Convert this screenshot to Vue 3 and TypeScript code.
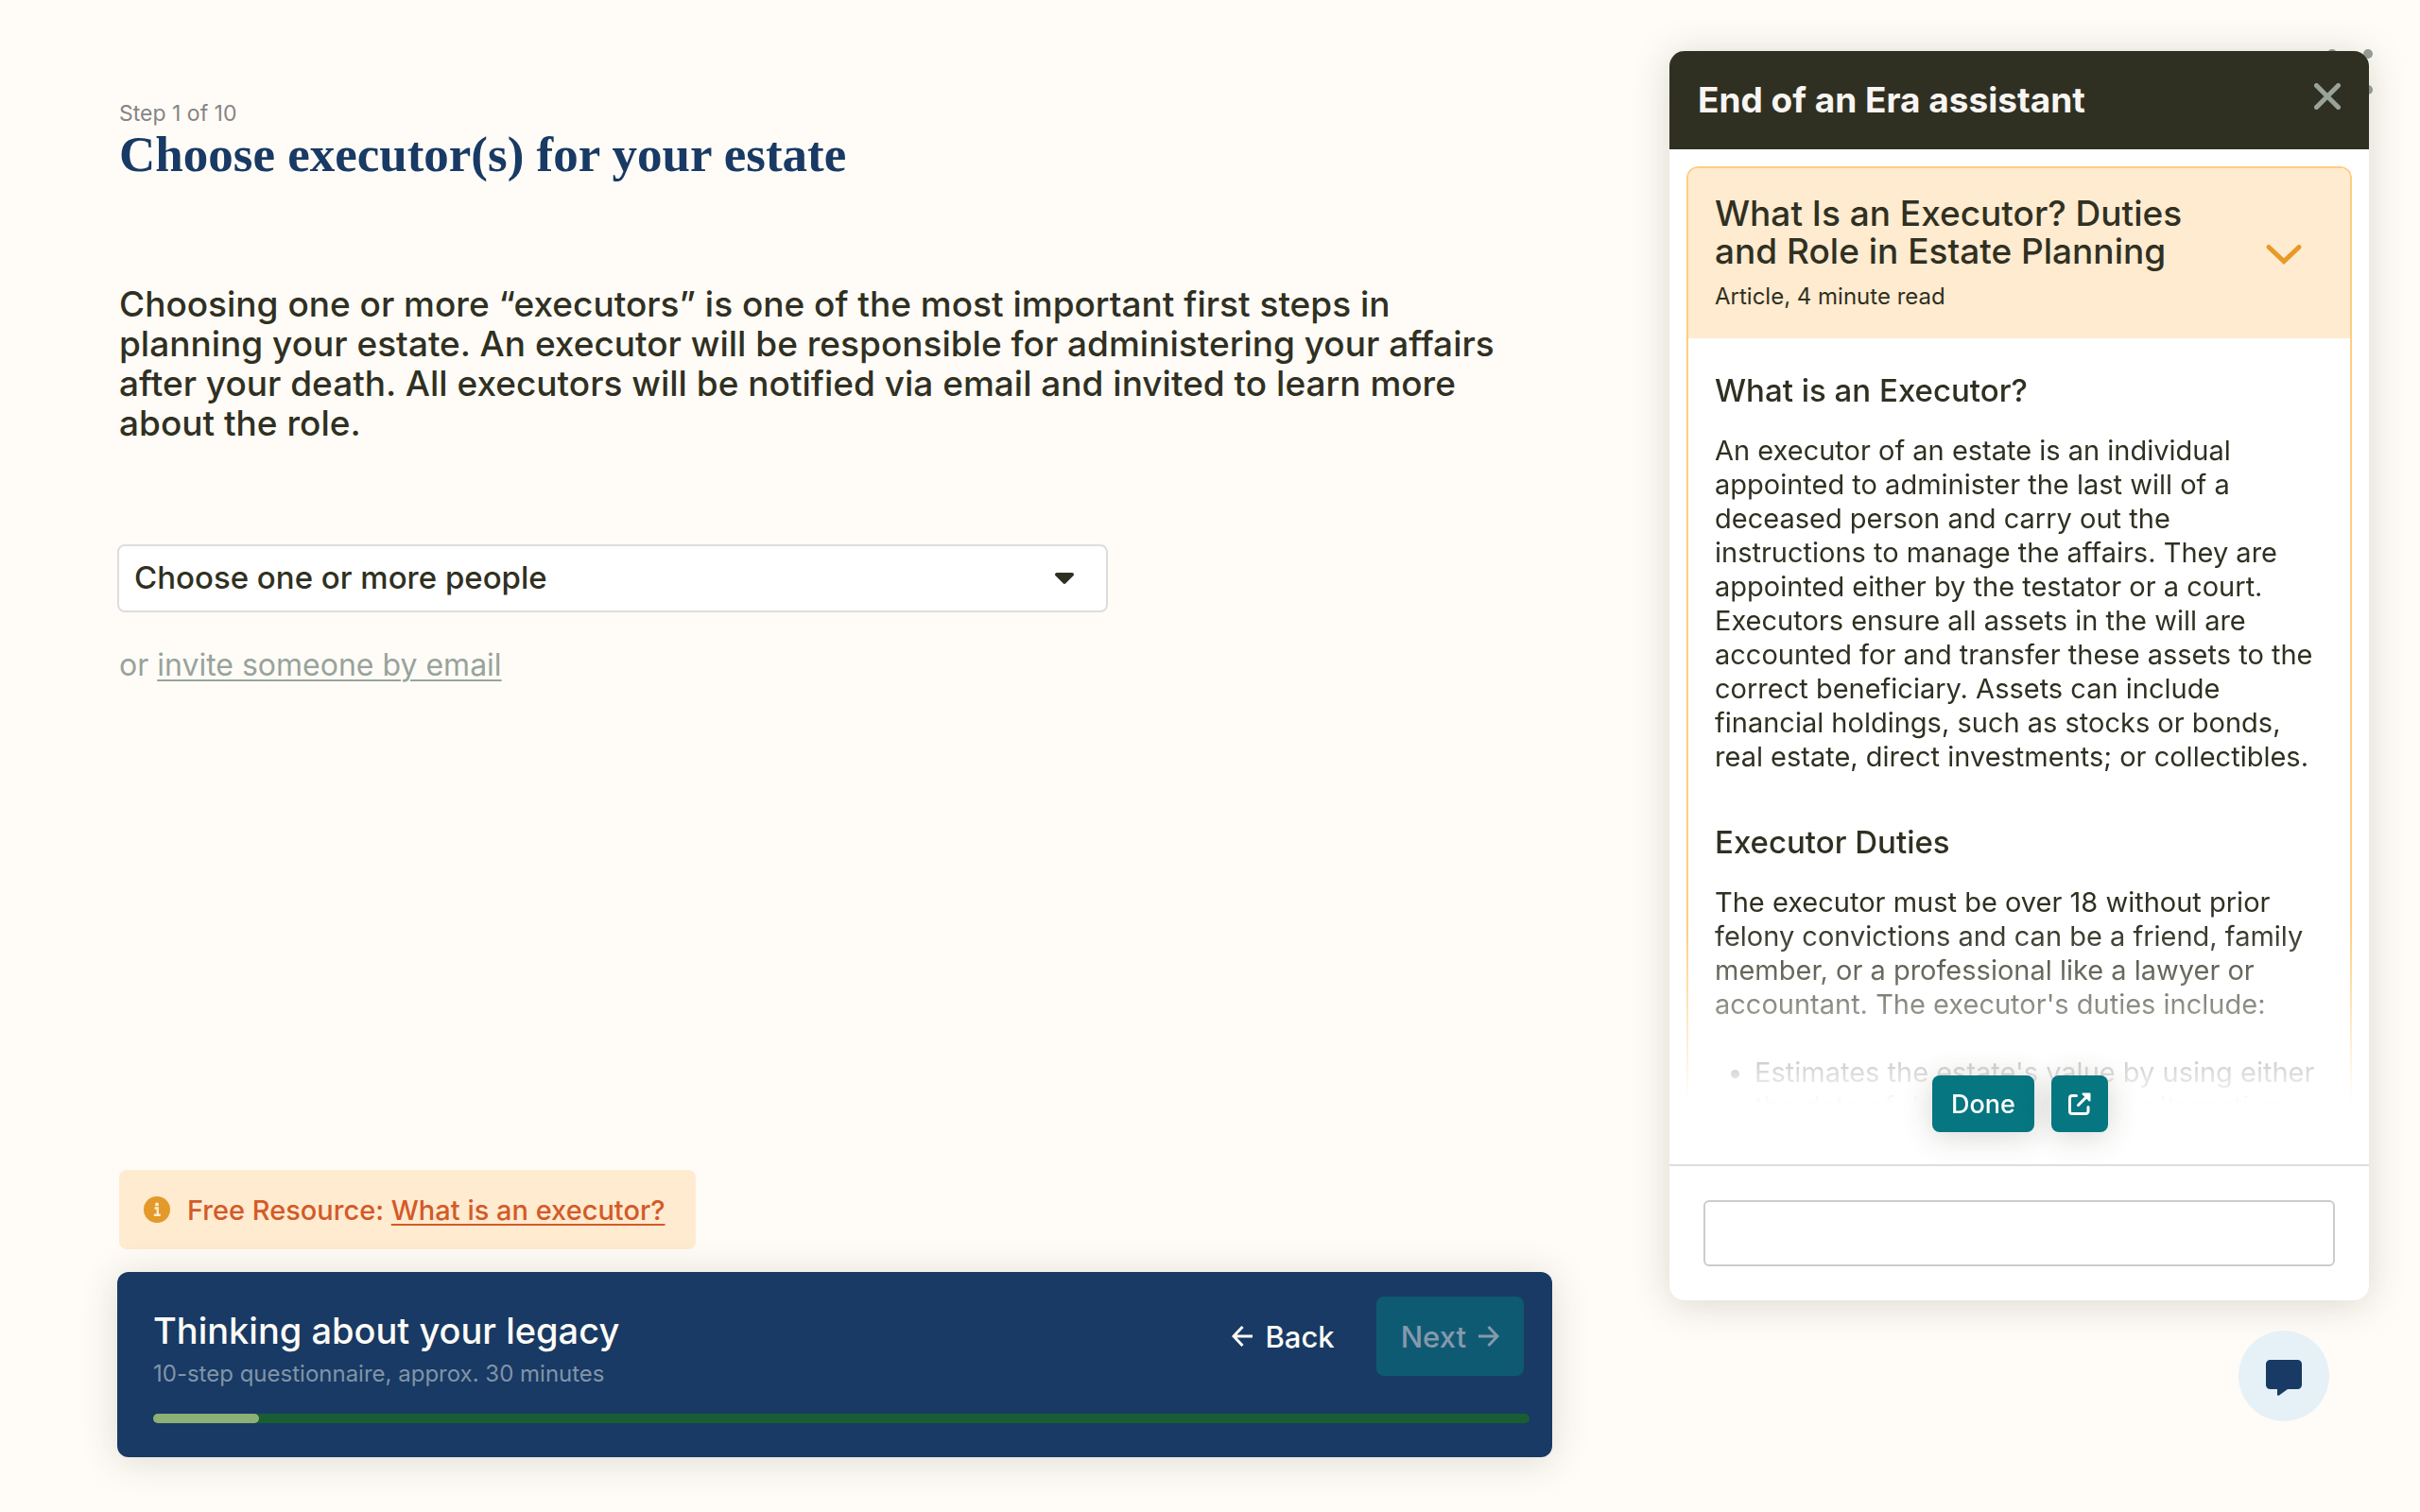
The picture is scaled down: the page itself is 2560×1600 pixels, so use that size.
<script setup lang="ts">
import { ref } from 'vue'

const person = ref('')
const message = ref('')
const step = 1
const totalSteps = 13

const intro: string[] = [
  'Choosing one or more “executors” is one of the most important first steps in',
  'planning your estate. An executor will be responsible for administering your affairs',
  'after your death. All executors will be notified via email and invited to learn more',
  'about the role.',
]

const definition: string[] = [
  'An executor of an estate is an individual',
  'appointed to administer the last will of a',
  'deceased person and carry out the',
  'instructions to manage the affairs. They are',
  'appointed either by the testator or a court.',
  'Executors ensure all assets in the will are',
  'accounted for and transfer these assets to the',
  'correct beneficiary. Assets can include',
  'financial holdings, such as stocks or bonds,',
  'real estate, direct investments; or collectibles.',
]

const duties: string[] = [
  'The executor must be over 18 without prior',
  'felony convictions and can be a friend, family',
  'member, or a professional like a lawyer or',
  "accountant. The executor's duties include:",
]

const dutyItems: string[][] = [
  ["Estimates the estate's value by using either", 'the date of death value or the alternative'],
]
</script>

<template>
  <div class="page">
    <button class="menu" type="button" aria-label="Menu">
      <svg width="48" height="48" viewBox="0 0 48 48" fill="currentColor" aria-hidden="true">
        <circle cx="5" cy="5" r="5" /><circle cx="43" cy="5" r="5" />
        <circle cx="5" cy="43" r="5" /><circle cx="43" cy="43" r="5" />
      </svg>
    </button>

    <main class="main">
      <header class="intro">
        <p class="step">Step 1 of 10</p>
        <h1>Choose executor(s) for your estate</h1>
        <p class="lead"><template v-for="(line, i) in intro" :key="i">{{ line }}<br></template></p>
      </header>

      <div class="picker">
        <select v-model="person" aria-label="Executors">
          <option value="">Choose one or more people</option>
        </select>
        <svg class="caret" width="20" height="12" viewBox="0 0 20 12" aria-hidden="true">
          <path d="M2 0h16c1.800 0 2.600 2 1.400 3.300l-8 8a2 2 0 0 1-2.800 0l-8-8C-.6 2 .2 0 2 0z" fill="#303022" />
        </svg>
      </div>
      <p class="invite">or <a href="#">invite someone by email</a></p>

      <div class="resource">
        <svg width="28" height="28" viewBox="0 0 28 28" aria-hidden="true">
          <circle cx="14" cy="14" r="14" fill="#e39a2b" />
          <circle cx="14" cy="8.500" r="2" fill="#ffebd0" />
          <path d="M11.500 12.500h3.300v7M10.800 19.800h7" fill="none" stroke="#ffebd0" stroke-width="2.400" />
        </svg>
        <span>Free Resource: <a href="#">What is an executor?</a></span>
      </div>

      <footer class="progress-card">
        <div class="progress-row">
          <div class="progress-text">
            <h2>Thinking about your legacy</h2>
            <p>10-step questionnaire, approx. 30 minutes</p>
          </div>
          <div class="nav">
            <button class="back" type="button">
              <svg width="22" height="22" viewBox="0 0 22 22" fill="none" stroke="currentColor" stroke-width="3" aria-hidden="true">
                <path d="M22 11H2.500M11.500 1L2 11l9.500 10" />
              </svg>
              Back
            </button>
            <button class="next" type="button" disabled>
              Next
              <svg width="22" height="22" viewBox="0 0 22 22" fill="none" stroke="currentColor" stroke-width="3" aria-hidden="true">
                <path d="M0 11h19.500M10.500 1L20 11l-9.500 10" />
              </svg>
            </button>
          </div>
        </div>
        <div class="track">
          <div class="fill" :style="{ width: (step / totalSteps) * 100 + '%' }"></div>
        </div>
      </footer>
    </main>

    <aside class="side">
      <section class="panel">
        <header class="panel-head">
          <h2>End of an Era assistant</h2>
          <button type="button" aria-label="Close">
            <svg width="28" height="28" viewBox="0 0 28 28" fill="none" stroke="currentColor" stroke-width="5" stroke-linecap="round" aria-hidden="true">
              <path d="M2.500 2.500l23 23M25.500 2.500l-23 23" />
            </svg>
          </button>
        </header>

        <div class="content">
          <article class="card">
            <header class="card-head">
              <div>
                <h3>What Is an Executor? Duties<br>and Role in Estate Planning</h3>
                <p>Article, 4 minute read</p>
              </div>
              <svg width="40" height="24" viewBox="0 0 40 24" fill="none" stroke="#e89a26" stroke-width="5" stroke-linecap="round" aria-hidden="true">
                <path d="M4 4.500l16 15 16-15" />
              </svg>
            </header>
            <div class="card-body">
              <h4>What is an Executor?</h4>
              <p><template v-for="(line, i) in definition" :key="i">{{ line }}<br></template></p>
              <h4>Executor Duties</h4>
              <p><template v-for="(line, i) in duties" :key="i">{{ line }}<br></template></p>
              <ul>
                <li v-for="(item, i) in dutyItems" :key="i">
                  <template v-for="(line, j) in item" :key="j">{{ line }}<br></template>
                </li>
              </ul>
            </div>
          </article>
          <div class="actions">
            <button class="done" type="button">Done</button>
            <button class="open" type="button" aria-label="Open in new window">
              <svg width="24" height="24" viewBox="0 0 24 24" fill="none" stroke="currentColor" stroke-width="3" stroke-linecap="round" stroke-linejoin="round" aria-hidden="true">
                <path d="M8.500 3.500H4a2.500 2.500 0 0 0-2.500 2.500v14A2.500 2.500 0 0 0 4 22.500h14.500A2.500 2.500 0 0 0 21 20v-4.500M10.500 13.500L21 3" />
                <path d="M15.500 1.500h7v7z" fill="currentColor" stroke-width="2" />
              </svg>
            </button>
          </div>
        </div>

        <form class="composer" @submit.prevent>
          <input v-model="message" type="text" aria-label="Message">
        </form>
      </section>

      <button class="chat" type="button" aria-label="Chat">
        <svg width="38" height="38" viewBox="0 0 38 38" fill="#183a64" aria-hidden="true">
          <path d="M4.500 0h29A4.500 4.500 0 0 1 38 4.500v22A4.500 4.500 0 0 1 33.500 31H23l-9 6.500c-1 .7-2 .3-2-.8V31H4.500A4.500 4.500 0 0 1 0 26.500v-22A4.500 4.500 0 0 1 4.500 0z" />
        </svg>
      </button>
    </aside>
  </div>
</template>

<style>
body {
  background: #fffcf7;
}
</style>

<style scoped>
* {
  box-sizing: border-box;
}
h1, h2, h3, h4, p, ul {
  margin: 0;
  padding: 0;
}
button, select, input {
  font: inherit;
  color: inherit;
}
button {
  display: flex;
  align-items: center;
  justify-content: center;
  padding: 0;
  border: 0;
  background: none;
}
a {
  color: inherit;
  text-decoration-thickness: 2px;
  text-underline-offset: 4px;
}
.page {
  position: relative;
  display: flex;
  gap: 124px;
  height: 100vh;
  padding: 0 54px 0 124px;
  background: #fffcf7;
  color: #303022;
  font-family: Inter, "Liberation Sans", sans-serif;
}
.menu {
  position: absolute;
  top: 52px;
  right: 50px;
  color: #98a099;
}
.main {
  display: flex;
  flex: 1;
  flex-direction: column;
  min-width: 0;
  padding: 106px 0 58px;
}
.intro {
  padding: 0 2px;
}
.step {
  color: #858585;
  font-size: 23px;
  line-height: 28px;
}
h1 {
  color: #183a64;
  font: bold 53px/58px "Liberation Serif", serif;
}
.lead {
  margin-top: 109px;
  font-size: 37px;
  font-weight: 500;
  line-height: 42px;
}
.picker {
  position: relative;
  max-width: 1048px;
  margin-top: 107px;
}
.picker select {
  display: block;
  width: 100%;
  height: 72px;
  padding: 0 60px 2px 16px;
  border: 2px solid #ddd;
  border-radius: 8px;
  appearance: none;
  background: #fff;
  font-size: 33px;
  font-weight: 500;
}
.caret {
  position: absolute;
  top: 30px;
  right: 36px;
  pointer-events: none;
}
.invite {
  margin-top: 36px;
  padding: 0 2px;
  color: #98a39c;
  font-size: 32px;
  line-height: 40px;
}
.resource {
  display: flex;
  align-items: center;
  align-self: flex-start;
  gap: 18px;
  height: 84px;
  margin: auto 2px 24px;
  padding: 0 33px 0 26px;
  border-radius: 8px;
  background: #ffebd0;
  color: #d35a28;
  font-size: 29px;
  font-weight: 500;
}
.progress-card {
  padding: 26px 24px 36px 38px;
  border-radius: 12px;
  background: #183a64;
  box-shadow: 0 4px 40px rgba(48, 48, 34, 0.16);
  color: #fffcf7;
}
.progress-row {
  display: flex;
  align-items: flex-start;
  justify-content: space-between;
  padding-right: 6px;
}
.progress-text {
  padding-top: 12px;
}
.progress-text h2 {
  font-size: 38px;
  font-weight: 500;
  line-height: 48px;
}
.progress-text p {
  margin-top: 8px;
  color: #8194a9;
  font-size: 24px;
  line-height: 28px;
}
.nav {
  display: flex;
  gap: 24px;
}
.nav button {
  gap: 13px;
  height: 84px;
  font-size: 31px;
  font-weight: 500;
}
.back {
  padding: 0 20px;
}
.nav .next {
  padding: 0 26px;
  border-radius: 8px;
  background: #0f5a73;
  color: #8599ad;
}
.track {
  height: 10px;
  margin-top: 28px;
  border-radius: 5px;
  background: #195e33;
}
.fill {
  height: 100%;
  border-radius: 5px;
  background: #8db077;
}
.side {
  position: relative;
  display: flex;
  flex: 0 0 740px;
  flex-direction: column;
  height: 100vh;
  padding: 54px 0 96px;
  pointer-events: none;
}
.side > * {
  pointer-events: auto;
}
.panel {
  display: flex;
  flex: 1;
  flex-direction: column;
  min-height: 0;
  border-radius: 16px;
  overflow: hidden;
  background: #fff;
  box-shadow: 0 4px 40px rgba(48, 48, 34, 0.18);
}
.panel-head {
  display: flex;
  align-items: flex-start;
  justify-content: space-between;
  padding: 28px 24px 28px 30px;
  background: #303022;
}
.panel-head h2 {
  color: #f8f5f2;
  font-size: 37px;
  font-weight: 700;
  line-height: 48px;
}
.panel-head button {
  width: 40px;
  height: 40px;
  color: #98a39c;
}
.content {
  position: relative;
  display: flex;
  flex: 1;
  flex-direction: column;
  min-height: 0;
  padding: 18px 18px 62px;
}
.card {
  flex: 1;
  min-height: 0;
  overflow: hidden;
  border: 2px solid #ffcd80;
  border-bottom: 0;
  border-radius: 12px 12px 0 0;
  mask-image: linear-gradient(to bottom, #000 calc(100% - 192px), transparent calc(100% - 2px));
}
.card-head {
  display: flex;
  align-items: center;
  justify-content: space-between;
  padding: 28px 50px 26px 28px;
  background: #ffebd0;
}
.card-head h3 {
  font-size: 37px;
  font-weight: 500;
  line-height: 40px;
}
.card-head p {
  margin-top: 10px;
  font-size: 24px;
  line-height: 36px;
}
.card-body {
  padding: 35px 0 0 28px;
  font-size: 29px;
  line-height: 36px;
  white-space: nowrap;
}
.card-body h4 {
  margin-bottom: 26px;
  font-size: 33px;
  font-weight: 500;
  line-height: 40px;
}
.card-body p + h4 {
  margin-top: 52px;
}
.card-body ul {
  margin-top: 36px;
  padding-left: 42px;
}
.actions {
  position: absolute;
  right: 0;
  bottom: 34px;
  left: 2px;
  display: flex;
  justify-content: center;
  gap: 18px;
}
.actions button {
  height: 60px;
  border-radius: 8px;
  background: #067680;
  box-shadow: 0 4px 32px rgba(48, 48, 34, 0.2);
  color: #fff;
  font-size: 27px;
  font-weight: 500;
}
.actions .done {
  padding: 0 20px;
}
.actions .open {
  width: 60px;
}
.composer {
  padding: 36px;
  border-top: 2px solid #ddd;
}
.composer input {
  display: block;
  width: 100%;
  height: 70px;
  padding: 0 16px;
  border: 2px solid #ccc;
  border-radius: 6px;
  background: #fff;
  font-size: 29px;
}
.chat {
  align-self: flex-end;
  flex-shrink: 0;
  width: 96px;
  height: 96px;
  margin: 32px 42px 0 0;
  padding-top: 3px;
  border-radius: 50%;
  background: #e6f1f7;
}
</style>
